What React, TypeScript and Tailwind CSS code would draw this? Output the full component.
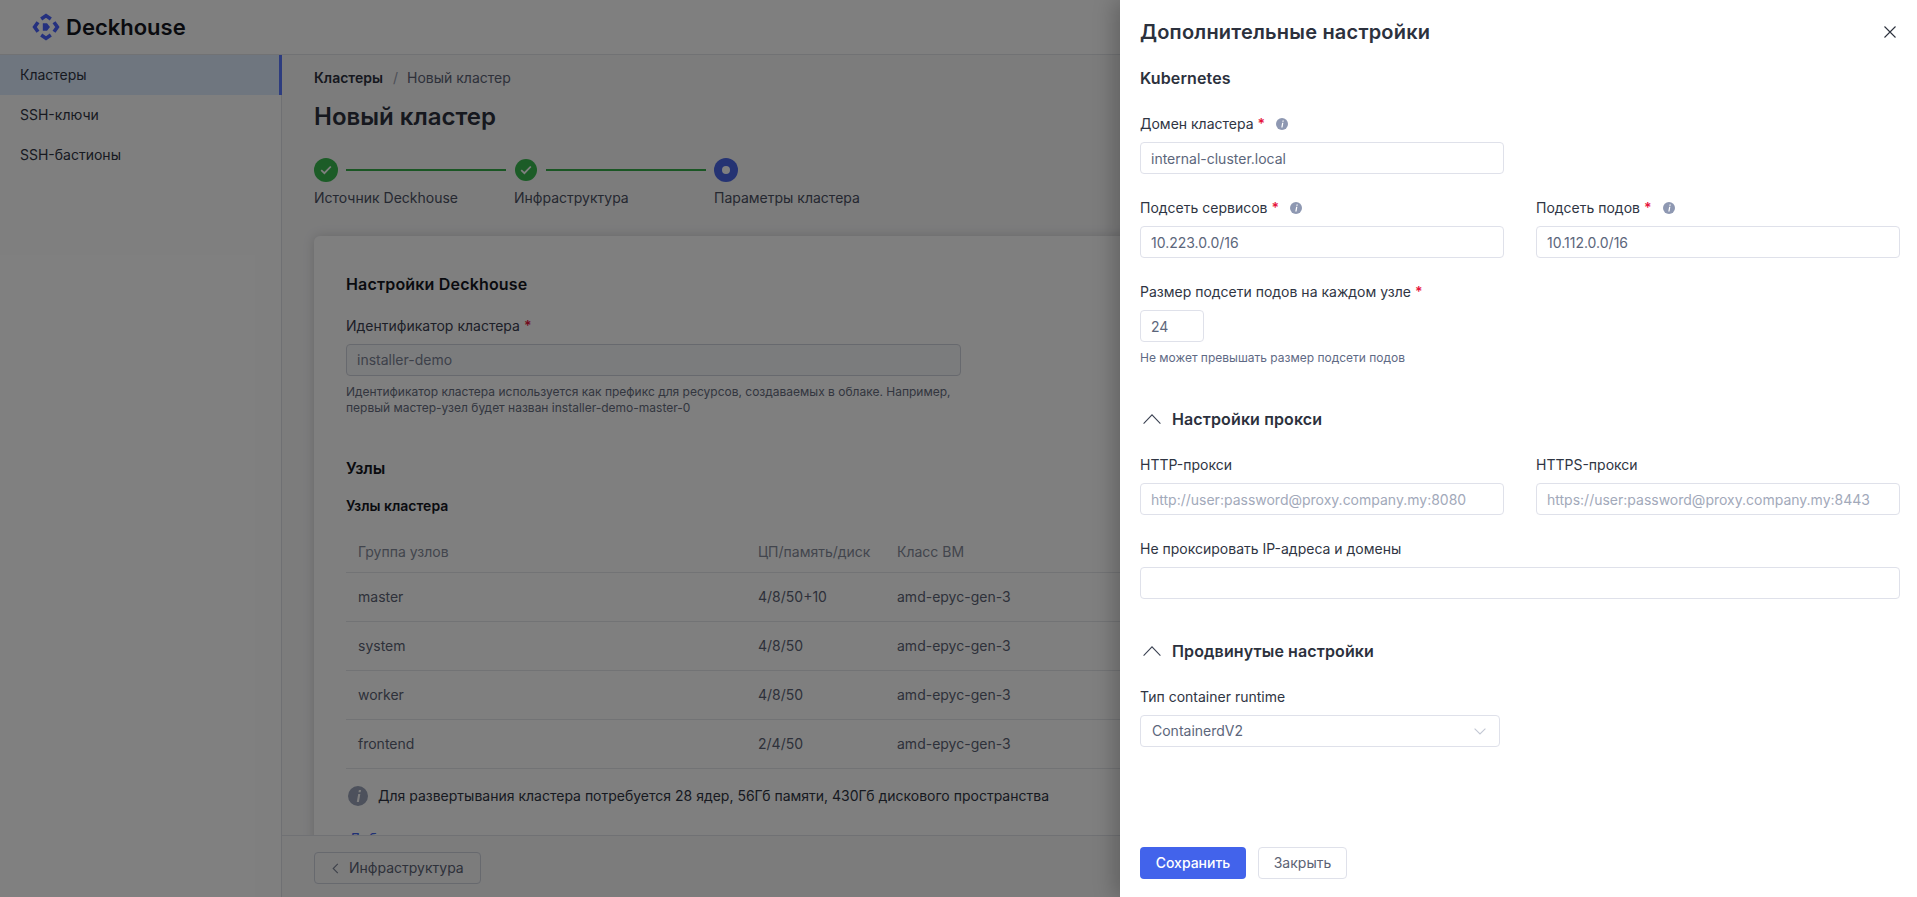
import React from 'react';

const FONT = "font-['Inter','Noto_Sans',sans-serif]";

const Logo = () => (
    <svg width="28" height="28" viewBox="0 0 28 28" fill="none">
        <g stroke="#4a63ff" strokeWidth="3.6" strokeLinejoin="miter">
            <path d="M9.2 6 L14 2.6 L18.8 6" />
            <path d="M9.2 22 L14 25.4 L18.8 22" />
            <path d="M6 9.2 L2.6 14 L6 18.8" />
            <path d="M22 9.2 L25.4 14 L22 18.8" />
        </g>
        <path d="M10.8 10.2 H15 L18 14 L15 17.8 H10.8 Z" fill="#4a63ff" />
    </svg>
);

const CheckCircle = ({ size }: { size: string }) => (
    <span className={`${size} flex shrink-0 items-center justify-center rounded-full bg-[#38b84f]`}>
        <svg width="12" height="10" viewBox="0 0 12 10" fill="none">
            <path d="M1.2 5.2 L4.4 8.2 L10.8 1.5" stroke="#fff" strokeWidth="1.8" />
        </svg>
    </span>
);

const InfoIcon = ({ size, color }: { size: number; color: string }) => (
    <svg width={size} height={size} viewBox="0 0 20 20" className="shrink-0">
        <circle cx="10" cy="10" r="10" fill={color} />
        <path d="M10.9 4 L13 4 L12.6 6.2 L10.5 6.2 Z M10.2 8 L12.3 8 L10.9 16 L8.8 16 Z" fill="#fff" />
    </svg>
);

const Star = () => <span className="ml-1 font-semibold text-[#e6143c]">*</span>;

const ArrowUp = () => (
    <svg width="18" height="10" viewBox="0 0 18 10" fill="none" className="ml-[3px] mr-[11px]">
        <path d="M0.6 9.6 L9 0.9 L17.4 9.6" stroke="#3b4252" strokeWidth="1.1" />
    </svg>
);

const Label = ({ text, required, info }: { text: string; required?: boolean; info?: boolean }) => (
    <div className="flex h-5 items-center text-sm leading-5 text-[#2f3543]">
        <span>{text}</span>
        {required && <Star />}
        {info && (
            <span className="ml-[11px]">
                <InfoIcon size={12} color="#8e98b2" />
            </span>
        )}
    </div>
);

const Field = ({
    label,
    value,
    placeholder,
    required,
    info,
}: {
    label: string;
    value?: string;
    placeholder?: string;
    required?: boolean;
    info?: boolean;
}) => (
    <div>
        <Label text={label} required={required} info={info} />
        <input
            readOnly
            value={value ?? ''}
            placeholder={placeholder}
            className="mt-2 block h-8 w-full rounded border border-[#dfe1ea] bg-white px-[10px] text-sm text-[#5c667b] outline-none placeholder:text-[#a2a9ba]"
        />
    </div>
);

const nodes = [
    { group: 'master', size: '4/8/50+10' },
    { group: 'system', size: '4/8/50' },
    { group: 'worker', size: '4/8/50' },
    { group: 'frontend', size: '2/4/50' },
];

const Wizard = () => (
    <div className="flex min-w-0 flex-1 flex-col bg-[#f8f8f9]">
        <div className="min-h-0 flex-1 overflow-hidden px-8 pt-[13px]">
            <div className="flex h-5 items-center text-sm leading-5">
                <span className="font-semibold text-[#2c313d]">Кластеры</span>
                <span className="ml-[10px] text-[#9aa0ae]">/</span>
                <span className="ml-[9px] text-[#5c6375]">Новый кластер</span>
            </div>
            <h1 className="mt-[13px] text-2xl leading-8 font-semibold text-[#2c313d]">Новый кластер</h1>

            <div className="mt-[25px] flex h-6 items-center">
                <CheckCircle size="h-6 w-6" />
                <span className="ml-2 h-0.5 w-40 bg-[#34ac48]" />
                <span className="ml-[9px]">
                    <CheckCircle size="h-[22px] w-[22px]" />
                </span>
                <span className="ml-[9px] h-0.5 w-40 bg-[#34ac48]" />
                <span className="ml-2 flex h-6 w-6 items-center justify-center rounded-full bg-[#4a67e6]">
                    <span className="h-2 w-2 rounded-full bg-white" />
                </span>
            </div>
            <div className="mt-1.5 flex text-sm leading-5 text-[#4b5162]">
                <span className="w-[200px]">Источник Deckhouse</span>
                <span className="w-[200px]">Инфраструктура</span>
                <span>Параметры кластера</span>
            </div>

            <div className="mt-7 rounded-md bg-white px-8 pt-9 pb-8 shadow-[0_0_12px_rgba(0,0,0,0.16)]">
                <h2 className="text-base leading-6 font-semibold tracking-[0.18px] text-[#14171f]">Настройки Deckhouse</h2>
                <div className="mt-5 w-[615px]">
                    <div className="text-sm leading-5 text-[#3a4050]">
                        Идентификатор кластера
                        <Star />
                    </div>
                    <div className="mt-2 flex h-8 items-center rounded border border-[#cfd3dc] bg-[#f7f8fa] px-[10px] text-sm text-[#7b8294]">
                        installer-demo
                    </div>
                    <p className="mt-2 text-xs leading-4 text-[#666d7e]">
                        Идентификатор кластера используется как префикс для ресурсов, создаваемых в облаке. Например,
                        первый мастер-узел будет назван installer-demo-master-0
                    </p>
                </div>

                <h2 className="mt-10 text-base leading-6 font-semibold text-[#14171f]">Узлы</h2>
                <h3 className="mt-4 text-sm leading-5 font-semibold text-[#14171f]">Узлы кластера</h3>

                <table className="mt-[17px] w-full table-fixed text-sm text-[#5c6375]">
                    <thead>
                        <tr className="h-[39px] border-b border-[#e4e6ea] text-left">
                            <th className="w-[400px] px-3 font-normal text-[#858b9a]">Группа узлов</th>
                            <th className="w-[139px] px-3 font-normal text-[#858b9a]">ЦП/память/диск</th>
                            <th className="px-3 font-normal text-[#858b9a]">Класс ВМ</th>
                        </tr>
                    </thead>
                    <tbody>
                        {nodes.map((n) => (
                            <tr key={n.group} className="h-[49px] border-b border-[#e4e6ea]">
                                <td className="px-3">{n.group}</td>
                                <td className="px-3">{n.size}</td>
                                <td className="px-3">amd-epyc-gen-3</td>
                            </tr>
                        ))}
                    </tbody>
                </table>

                <div className="mt-[17px] ml-0.5 flex h-5 items-center text-sm text-[#2f3543]">
                    <InfoIcon size={20} color="#9aa3b8" />
                    <span className="ml-2.5">
                        Для развертывания кластера потребуется 28 ядер, 56Гб памяти, 430Гб дискового пространства
                    </span>
                </div>
                <div className="mt-[23px] ml-[3px] text-sm leading-5 text-[#4263eb]">Добавить группу узлов</div>
            </div>
        </div>

        <div className="h-[62px] shrink-0 border-t border-[#e0e2e8] px-8 pt-4">
            <div className="flex h-8 w-[167px] items-center rounded border border-[#cfd3dc] pl-[17px] text-sm text-[#5c6375]">
                <svg width="7" height="11" viewBox="0 0 7 11" fill="none">
                    <path d="M5.8 0.8 L1.2 5.5 L5.8 10.2" stroke="#7b8294" strokeWidth="1.1" />
                </svg>
                <span className="ml-2.5">Инфраструктура</span>
            </div>
        </div>
    </div>
);

const Drawer = () => (
    <div className="absolute top-0 right-0 bottom-0 flex w-[797px] flex-col bg-white pt-[18px] pr-[17px] pb-[18px] pl-5 shadow-[-6px_0_20px_rgba(0,0,0,0.22)]">
        <div className="flex h-7 items-center justify-between">
            <h2 className="text-xl leading-7 font-semibold tracking-[0.2px] text-[#2c313d]">Дополнительные настройки</h2>
            <svg width="12" height="12" viewBox="0 0 12 12" fill="none" className="mr-1">
                <path d="M0.5 0.5 L11.5 11.5 M11.5 0.5 L0.5 11.5" stroke="#2c313d" strokeWidth="1.1" />
            </svg>
        </div>

        <h3 className="mt-5 text-base leading-6 font-semibold tracking-[0.12px] text-[#2c313d]">Kubernetes</h3>

        <div className="mt-6 w-[364px]">
            <Field label="Домен кластера" value="internal-cluster.local" required info />
        </div>

        <div className="mt-6 grid grid-cols-2 gap-x-8">
            <Field label="Подсеть сервисов" value="10.223.0.0/16" required info />
            <Field label="Подсеть подов" value="10.112.0.0/16" required info />
        </div>

        <div className="mt-6">
            <Label text="Размер подсети подов на каждом узле" required />
            <input
                readOnly
                value="24"
                className="mt-2 block h-8 w-16 rounded border border-[#dfe1ea] px-[10px] text-sm text-[#5c667b] outline-none"
            />
            <p className="mt-2 text-xs leading-4 text-[#5f6a85]">Не может превышать размер подсети подов</p>
        </div>

        <h3 className="mt-[41px] flex items-center text-base leading-6 font-semibold tracking-[0.12px] text-[#2c313d]">
            <ArrowUp />
            Настройки прокси
        </h3>

        <div className="mt-6 grid grid-cols-2 gap-x-8">
            <Field label="HTTP-прокси" placeholder="http://user:password@proxy.company.my:8080" />
            <Field label="HTTPS-прокси" placeholder="https://user:password@proxy.company.my:8443" />
        </div>

        <div className="mt-6">
            <Field label="Не проксировать IP-адреса и домены" />
        </div>

        <h3 className="mt-10 flex items-center text-base leading-6 font-semibold tracking-[0.12px] text-[#2c313d]">
            <ArrowUp />
            Продвинутые настройки
        </h3>

        <div className="mt-6">
            <Label text="Тип container runtime" />
            <div className="mt-2 flex h-8 w-[360px] items-center justify-between rounded border border-[#dfe1ea] pr-[13px] pl-[11px] text-sm text-[#5c667b]">
                ContainerdV2
                <svg width="12" height="7" viewBox="0 0 12 7" fill="none">
                    <path d="M0.6 0.6 L6 6 L11.4 0.6" stroke="#c3c8d4" strokeWidth="1.1" />
                </svg>
            </div>
        </div>

        <div className="mt-auto flex gap-3">
            <button className="h-8 w-[106px] rounded bg-[#4263eb] text-sm font-medium text-white">Сохранить</button>
            <button className="h-8 w-[89px] rounded border border-[#dfe1ea] bg-white text-sm text-[#5c6375]">
                Закрыть
            </button>
        </div>
    </div>
);

export default function App() {
    return (
        <div className={`relative flex h-screen flex-col overflow-hidden bg-white ${FONT}`}>
            <header className="flex h-[55px] shrink-0 items-center border-b border-[#e2e4e8] pl-8">
                <Logo />
                <span className="ml-1.5 text-[22px] leading-7 font-semibold text-[#14171f]">Deckhouse</span>
            </header>

            <div className="flex min-h-0 flex-1">
                <aside className="w-[282px] shrink-0 border-r border-[#dfe1e6] text-sm text-[#2f3543]">
                    <div className="-mr-px flex h-10 items-center border-r-[3px] border-[#5a78ff] bg-[#deecff] pl-5">
                        Кластеры
                    </div>
                    <div className="flex h-10 items-center pl-5">SSH-ключи</div>
                    <div className="flex h-10 items-center pl-5">SSH-бастионы</div>
                </aside>
                <Wizard />
            </div>

            {/* затемнение под боковой панелью */}
            <div className="absolute inset-0 bg-black/50" />
            <Drawer />
        </div>
    );
}
